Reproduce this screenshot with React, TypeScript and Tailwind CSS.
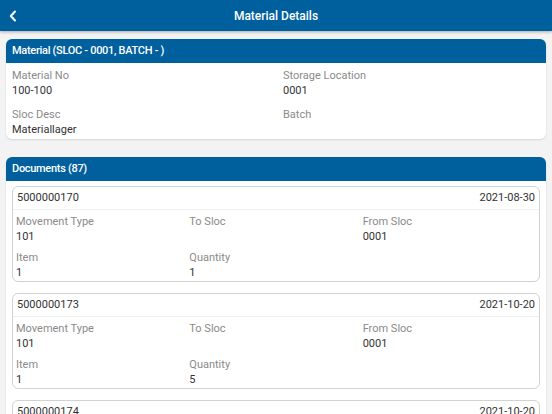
import React from "react";

type Doc = { no: string; date: string; mvt: string; to: string; from: string; item: string; qty: string };

const docs: Doc[] = [
  { no: "5000000170", date: "2021-08-30", mvt: "101", to: "", from: "0001", item: "1", qty: "1" },
  { no: "5000000173", date: "2021-10-20", mvt: "101", to: "", from: "0001", item: "1", qty: "5" },
  { no: "5000000174", date: "2021-10-20", mvt: "101", to: "", from: "0001", item: "1", qty: "2" },
];

function Field({ label, value }: { label: string; value: string }) {
  return (
    <div className="flex flex-col">
      <span className="text-[11px] leading-[15px] text-[#8a8a8a]">{label}</span>
      <span className="text-[11px] leading-[15px] text-[#333] h-[15px]">{value}</span>
    </div>
  );
}

function SectionHeader({ title }: { title: string }) {
  return (
    <div className="bg-[#00609e] h-[24px] shrink-0 flex items-center px-[6px] rounded-t-[6px]">
      <span className="text-white text-[11px] font-medium tracking-[-0.3px]">{title}</span>
    </div>
  );
}

function DocCard({ d }: { d: Doc }) {
  return (
    <div className="bg-white border border-[#d2d2d2] rounded-[6px] shrink-0">
      <div className="h-[23px] flex items-center justify-between px-[4px] border-b border-[#f0f0f0] text-[11px] text-[#333]">
        <span>{d.no}</span>
        <span>{d.date}</span>
      </div>
      <div className="grid grid-cols-3 gap-y-[6px] px-[3px] pt-[4px] pb-[1px]">
        <Field label="Movement Type" value={d.mvt} />
        <Field label="To Sloc" value={d.to} />
        <Field label="From Sloc" value={d.from} />
        <Field label="Item" value={d.item} />
        <Field label="Quantity" value={d.qty} />
      </div>
    </div>
  );
}

export default function App() {
  return (
    <div className="w-[552px] h-[414px] overflow-hidden bg-[#f3f3f3]" style={{ fontFamily: "Roboto, 'Noto Sans', sans-serif" }}>
      <div className="h-[31px] bg-[#00609e] flex items-center relative shadow-[0_1px_3px_rgba(0,0,0,0.3)] z-10">
        <svg width="8" height="12" viewBox="0 0 8 12" className="ml-[9px]">
          <path d="M6 1.5 L1.8 6 L6 10.5" fill="none" stroke="white" strokeWidth="2" strokeLinecap="round" strokeLinejoin="round" />
        </svg>
        <span className="absolute left-0 right-0 text-center text-white text-[12px] font-medium pointer-events-none">Material Details</span>
      </div>

      <div className="flex flex-col px-[6px] pt-[8px] gap-[18px]">
        <div className="bg-white rounded-[6px] shadow-[0_1px_2px_rgba(0,0,0,0.12)] shrink-0">
          <SectionHeader title="Material (SLOC - 0001, BATCH - )" />
          <div className="grid grid-cols-[271px_1fr] gap-y-[9px] px-[6px] pt-[5px] pb-[2px]">
            <Field label="Material No" value="100-100" />
            <Field label="Storage Location" value="0001" />
            <Field label="Sloc Desc" value="Materiallager" />
            <Field label="Batch" value="" />
          </div>
        </div>

        <div className="bg-white rounded-t-[6px] shadow-[0_1px_2px_rgba(0,0,0,0.12)] flex flex-col shrink-0">
          <SectionHeader title="Documents (87)" />
          <div className="flex flex-col gap-[11px] px-[6px] pt-[5px] pb-[6px]">
            {docs.map((d) => (
              <DocCard key={d.no} d={d} />
            ))}
          </div>
        </div>
      </div>
    </div>
  );
}
